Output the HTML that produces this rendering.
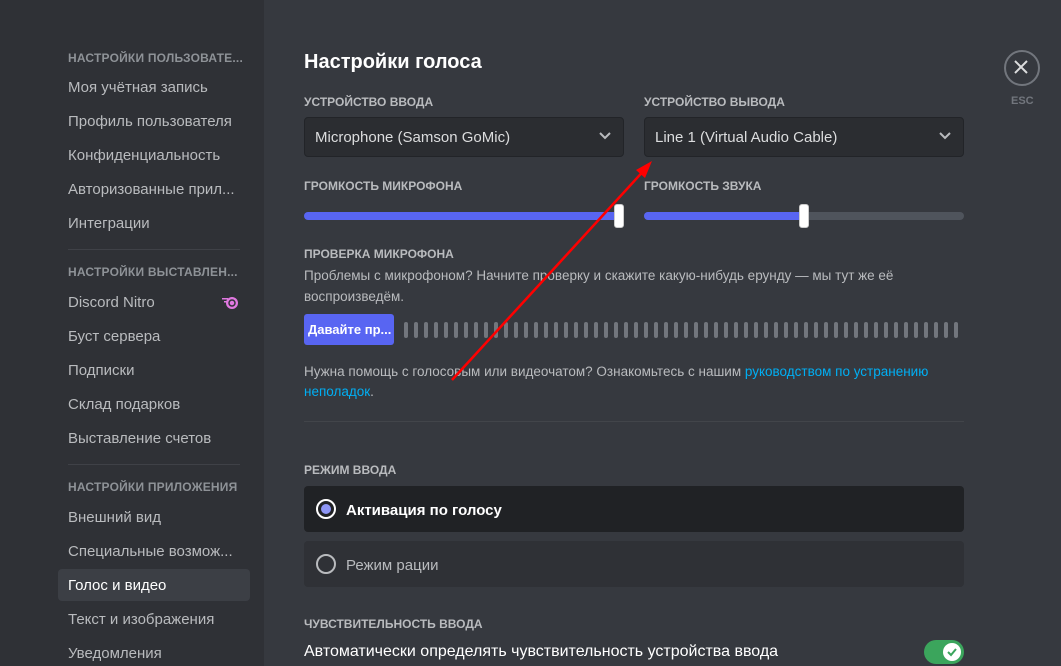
<!DOCTYPE html>
<html><head><meta charset="utf-8"><style>
*{margin:0;padding:0;box-sizing:border-box}
body{width:1061px;height:666px;overflow:hidden;background:#36393f;font-family:"Liberation Sans","Noto Sans CJK SC",sans-serif;position:relative}
.sb{position:absolute;left:0;top:0;width:264px;height:666px;background:#2f3136}
.a{position:absolute;white-space:nowrap}
.h{font-size:12px;font-weight:bold;color:#8e9297;letter-spacing:.2px}
.it{font-size:15px;color:#b9bbbe;left:68px}
.dv{position:absolute;left:68px;width:172px;height:1px;background:#3f4147}
.lb{font-size:12px;font-weight:bold;color:#b9bbbe}
.dd{position:absolute;height:40px;background:#2b2d31;border:1px solid #222428;border-radius:4px;color:#dcddde;font-size:15px;padding:10px 10px}
.tr{position:absolute;height:8px;border-radius:4px;background:#4f545c}
.th{position:absolute;width:10px;height:24px;background:#fff;border-radius:3px;border:1px solid #ccc}
.tx{font-size:13.5px;color:#b9bbbe}
.bars{position:absolute;left:404px;top:322px;display:flex;gap:6px}
.bars span{width:4px;height:16px;border-radius:2px;background:#72767d}
</style></head><body>
<div class="sb"></div>
<div class="a h" style="left:68px;top:51px">НАСТРОЙКИ ПОЛЬЗОВАТЕ...</div>
<div class="a it" style="top:79px">Моя учётная запись</div>
<div class="a it" style="top:113px">Профиль пользователя</div>
<div class="a it" style="top:147px">Конфиденциальность</div>
<div class="a it" style="top:181px">Авторизованные прил...</div>
<div class="a it" style="top:215px">Интеграции</div>
<div class="dv" style="top:249px"></div>
<div class="a h" style="left:68px;top:265px">НАСТРОЙКИ ВЫСТАВЛЕН...</div>
<div class="a it" style="top:294px">Discord Nitro</div>
<svg class="a" style="left:220px;top:295px" width="20" height="16" viewBox="0 0 20 16"><circle cx="12" cy="8" r="6" fill="#e078e0"/><circle cx="12" cy="8" r="3" fill="none" stroke="#2f3136" stroke-width="1.5"/><rect x="2" y="3" width="6" height="1.5" fill="#e078e0"/><rect x="4" y="6" width="4" height="1.5" fill="#e078e0"/></svg>
<div class="a it" style="top:328px">Буст сервера</div>
<div class="a it" style="top:362px">Подписки</div>
<div class="a it" style="top:396px">Склад подарков</div>
<div class="a it" style="top:430px">Выставление счетов</div>
<div class="dv" style="top:464px"></div>
<div class="a h" style="left:68px;top:480px">НАСТРОЙКИ ПРИЛОЖЕНИЯ</div>
<div class="a it" style="top:509px">Внешний вид</div>
<div class="a it" style="top:543px">Специальные возмож...</div>
<div class="a" style="left:58px;top:569px;width:192px;height:32px;background:#3c3f45;border-radius:4px"></div>
<div class="a it" style="top:577px;color:#fff">Голос и видео</div>
<div class="a it" style="top:611px">Текст и изображения</div>
<div class="a it" style="top:645px">Уведомления</div>

<div class="a" style="left:304px;top:51px;font-size:20px;font-weight:bold;color:#fff">Настройки голоса</div>
<div class="a lb" style="left:304px;top:95px">УСТРОЙСТВО ВВОДА</div>
<div class="a lb" style="left:644px;top:95px">УСТРОЙСТВО ВЫВОДА</div>
<div class="dd" style="left:304px;top:117px;width:320px;padding-top:11px">Microphone (Samson GoMic)</div>
<div class="dd" style="left:644px;top:117px;width:320px;padding-top:11px">Line 1 (Virtual Audio Cable)</div>
<svg class="a" style="left:598px;top:131px" width="14" height="10"><path d="M2 2l5 5 5-5" stroke="#b9bbbe" stroke-width="2" fill="none"/></svg>
<svg class="a" style="left:938px;top:131px" width="14" height="10"><path d="M2 2l5 5 5-5" stroke="#b9bbbe" stroke-width="2" fill="none"/></svg>
<div class="a lb" style="left:304px;top:179px">ГРОМКОСТЬ МИКРОФОНА</div>
<div class="a lb" style="left:644px;top:179px">ГРОМКОСТЬ ЗВУКА</div>
<div class="tr" style="left:304px;top:212px;width:316px;background:#5865f2"></div>
<div class="th" style="left:614px;top:204px"></div>
<div class="tr" style="left:644px;top:212px;width:320px"></div>
<div class="tr" style="left:644px;top:212px;width:160px;background:#5865f2"></div>
<div class="th" style="left:799px;top:204px"></div>
<div class="a lb" style="left:304px;top:247px">ПРОВЕРКА МИКРОФОНА</div>
<div class="a tx" style="left:304px;top:268px">Проблемы с микрофоном? Начните проверку и скажите какую-нибудь ерунду — мы тут же её</div>
<div class="a tx" style="left:304px;top:289px">воспроизведём.</div>
<div class="a" style="left:304px;top:314px;width:90px;height:31px;background:#5865f2;border-radius:3px;color:#fff;font-size:13px;font-weight:bold;padding:8px 0 0 4px">Давайте пр...</div>
<div class="bars"><span></span><span></span><span></span><span></span><span></span><span></span><span></span><span></span><span></span><span></span><span></span><span></span><span></span><span></span><span></span><span></span><span></span><span></span><span></span><span></span><span></span><span></span><span></span><span></span><span></span><span></span><span></span><span></span><span></span><span></span><span></span><span></span><span></span><span></span><span></span><span></span><span></span><span></span><span></span><span></span><span></span><span></span><span></span><span></span><span></span><span></span><span></span><span></span><span></span><span></span><span></span><span></span><span></span><span></span><span></span><span></span></div>
<div class="a tx" style="left:304px;top:364px">Нужна помощь с голосовым или видеочатом? Ознакомьтесь с нашим <span style="color:#00aff4">руководством по устранению</span></div>
<div class="a tx" style="left:304px;top:384px"><span style="color:#00aff4">неполадок</span>.</div>
<div class="a" style="left:304px;top:421px;width:660px;height:1px;background:#42454a"></div>
<div class="a lb" style="left:304px;top:463px">РЕЖИМ ВВОДА</div>
<div class="a" style="left:304px;top:486px;width:660px;height:46px;background:#202225;border-radius:4px"></div>
<div class="a" style="left:316px;top:499px;width:20px;height:20px;border:2px solid #fff;border-radius:50%"><div style="margin:3px;width:10px;height:10px;border-radius:50%;background:#8e96f5"></div></div>
<div class="a" style="left:346px;top:502px;font-size:15px;font-weight:bold;color:#fff">Активация по голосу</div>
<div class="a" style="left:304px;top:541px;width:660px;height:46px;background:#2f3136;border-radius:4px"></div>
<div class="a" style="left:316px;top:554px;width:20px;height:20px;border:2px solid #b9bbbe;border-radius:50%"></div>
<div class="a" style="left:346px;top:557px;font-size:15px;color:#b9bbbe">Режим рации</div>
<div class="a lb" style="left:304px;top:617px">ЧУВСТВИТЕЛЬНОСТЬ ВВОДА</div>
<div class="a" style="left:304px;top:643px;font-size:16px;color:#fff">Автоматически определять чувствительность устройства ввода</div>
<div class="a" style="left:924px;top:640px;width:40px;height:24px;background:#3ba55c;border-radius:12px"><div style="position:absolute;left:19px;top:3px;width:18px;height:18px;background:#fff;border-radius:50%"></div><svg style="position:absolute;left:22px;top:6px" width="12" height="12"><path d="M2 6l3 3 5-6" stroke="#3ba55c" stroke-width="2" fill="none"/></svg></div>

<div class="a" style="left:1004px;top:50px;width:36px;height:36px;border:2px solid #72767d;border-radius:50%"></div>
<svg class="a" style="left:1013px;top:59px" width="16" height="16"><path d="M2 2L14 14M14 2L2 14" stroke="#dcddde" stroke-width="2"/></svg>
<div class="a" style="left:1011px;top:95px;font-size:11px;font-weight:bold;color:#72767d">ESC</div>

<svg class="a" style="left:0;top:0" width="1061" height="666"><path d="M452 380L648 166" stroke="#f00" stroke-width="2.5"/><path d="M652 161L636 170L645 178Z" fill="#f00"/></svg>
</body></html>
